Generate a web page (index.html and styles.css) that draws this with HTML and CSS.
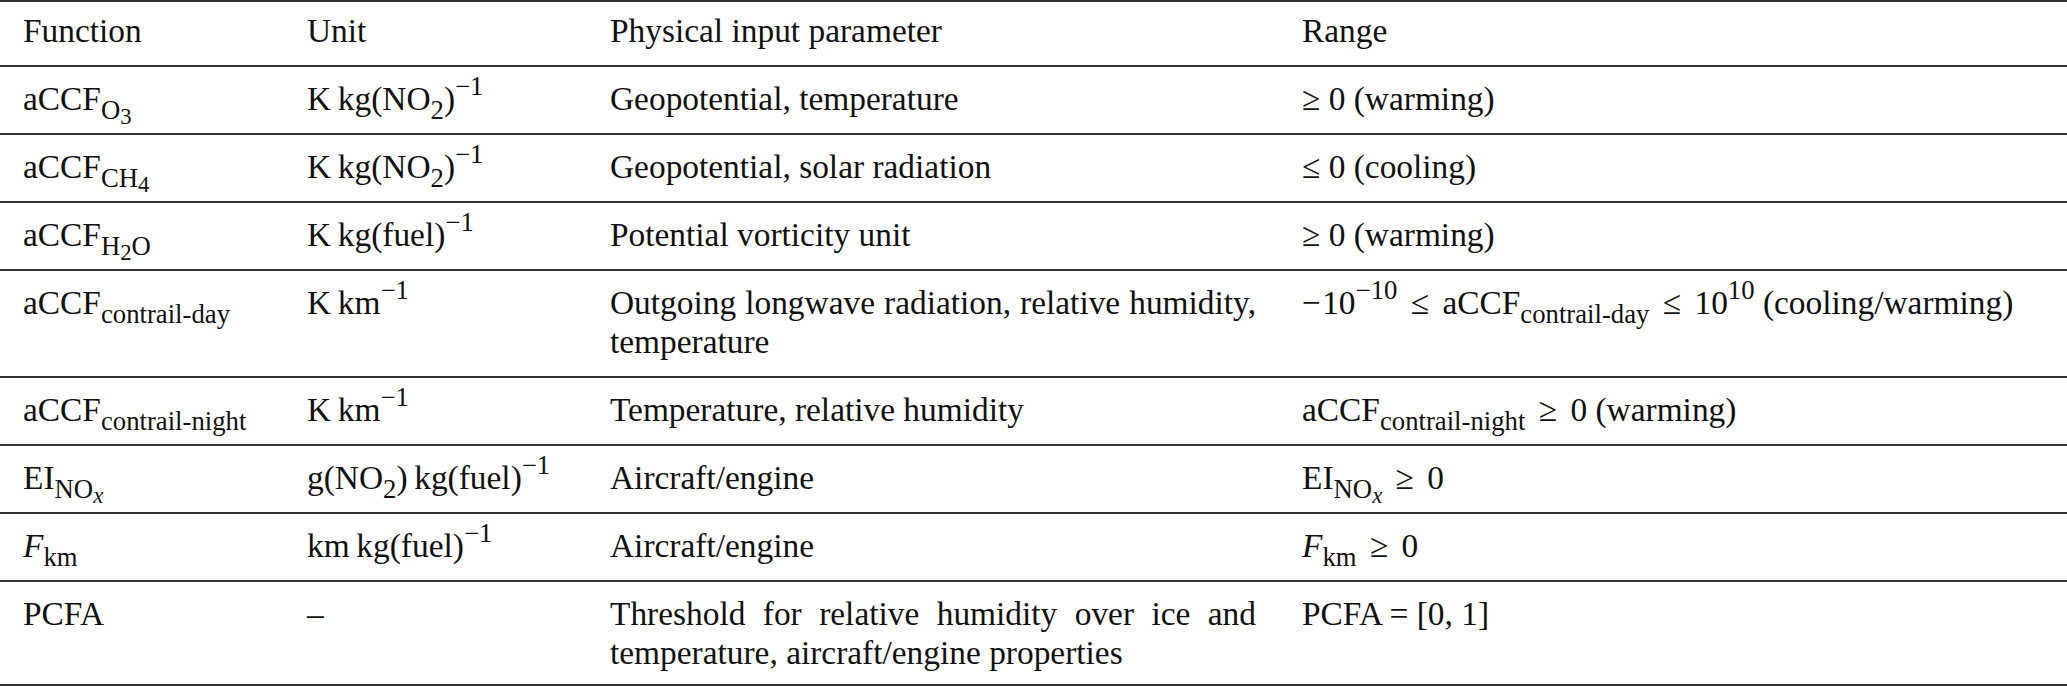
FILE: index.html
```html
<!DOCTYPE html>
<html lang="en">
<head>
  <meta charset="UTF-8" />
  <title>aCCF functions and input parameters</title>
  <link rel="stylesheet" href="styles.css">
</head>
<body>

<table class="params">
  <thead>
    <tr>
      <th class="fn">Function</th>
      <th class="unit">Unit</th>
      <th class="input">Physical input parameter</th>
      <th class="range">Range</th>
    </tr>
  </thead>
  <tbody>
    <tr>
      <td class="fn">aCCF<sub>O<sub>3</sub></sub></td>
      <td class="unit">K&#8201;kg(NO<sub>2</sub>)<sup>&minus;1</sup></td>
      <td class="input">Geopotential, temperature</td>
      <td class="range">&ge; 0 (warming)</td>
    </tr>
    <tr>
      <td class="fn">aCCF<sub>CH<sub>4</sub></sub></td>
      <td class="unit">K&#8201;kg(NO<sub>2</sub>)<sup>&minus;1</sup></td>
      <td class="input">Geopotential, solar radiation</td>
      <td class="range">&le; 0 (cooling)</td>
    </tr>
    <tr>
      <td class="fn">aCCF<sub>H<sub>2</sub>O</sub></td>
      <td class="unit">K&#8201;kg(fuel)<sup>&minus;1</sup></td>
      <td class="input">Potential vorticity unit</td>
      <td class="range">&ge; 0 (warming)</td>
    </tr>
    <tr>
      <td class="fn">aCCF<sub>contrail-day</sub></td>
      <td class="unit">K&#8201;km<sup>&minus;1</sup></td>
      <td class="input">Outgoing longwave radiation, relative humidity, temperature</td>
      <td class="range"><span class="neg">&minus;</span>10<sup>&minus;10</sup> <span class="rel">&le;</span> aCCF<sub>contrail-day</sub> <span class="rel">&le;</span> 10<sup>10</sup> (cooling/warming)</td>
    </tr>
    <tr>
      <td class="fn">aCCF<sub>contrail-night</sub></td>
      <td class="unit">K&#8201;km<sup>&minus;1</sup></td>
      <td class="input">Temperature, relative humidity</td>
      <td class="range">aCCF<sub>contrail-night</sub> <span class="rel">&ge;</span> 0 (warming)</td>
    </tr>
    <tr>
      <td class="fn">EI<sub>NO<sub><i>x</i></sub></sub></td>
      <td class="unit">g(NO<sub>2</sub>)&#8201;kg(fuel)<sup>&minus;1</sup></td>
      <td class="input">Aircraft/engine</td>
      <td class="range">EI<sub>NO<sub><i>x</i></sub></sub> <span class="rel">&ge;</span> 0</td>
    </tr>
    <tr>
      <td class="fn"><i>F</i><sub>km</sub></td>
      <td class="unit">km&#8201;kg(fuel)<sup>&minus;1</sup></td>
      <td class="input">Aircraft/engine</td>
      <td class="range"><i>F</i><sub>km</sub> <span class="rel">&ge;</span> 0</td>
    </tr>
    <tr class="last">
      <td class="fn">PCFA</td>
      <td class="unit">&ndash;</td>
      <td class="input">Threshold for relative humidity over ice and temperature, aircraft/engine properties</td>
      <td class="range">PCFA = [0, 1]</td>
    </tr>
  </tbody>
</table>

</body>
</html>
```

FILE: styles.css
```css
body {
  margin: 0;
  padding: 0;
  background: #ffffff;
  color: #111111;
  font-family: "Liberation Serif", "Times New Roman", serif;
  font-size: 33.4px;
}
.params {
  width: 2067px;
  table-layout: fixed;
  border-collapse: separate;
  border-spacing: 0;
}
.params th,
.params td {
  box-sizing: border-box;
  border-top: 2px solid #333333;
  font-weight: normal;
  text-align: left;
  vertical-align: top;
  line-height: 39px;
  padding: 12px 0 15px 10px;
  white-space: normal;
}
.params th {
  padding-top: 9px;
  padding-bottom: 15px;
}
.params .last td {
  border-bottom: 2px solid #333333;
  padding-bottom: 12px;
}
.fn {
  width: 297px;
}
.params .fn {
  padding-left: 23px;
}
.unit {
  width: 303px;
}
.input {
  width: 692px;
}
.params .input {
  padding-right: 36px;
  text-align: justify;
}
.range {
  width: 775px;
}
.rel {
  margin: 0 0.15em;
}
.neg {
  margin-right: 0.04em;
}
sub,
sup {
  font-size: 0.8em;
  line-height: 0;
  position: relative;
  vertical-align: baseline;
}
sub {
  top: 0.32em;
}
sup {
  top: -0.55em;
}
sub sub {
  font-size: 0.85em;
  top: 0.25em;
}
```
